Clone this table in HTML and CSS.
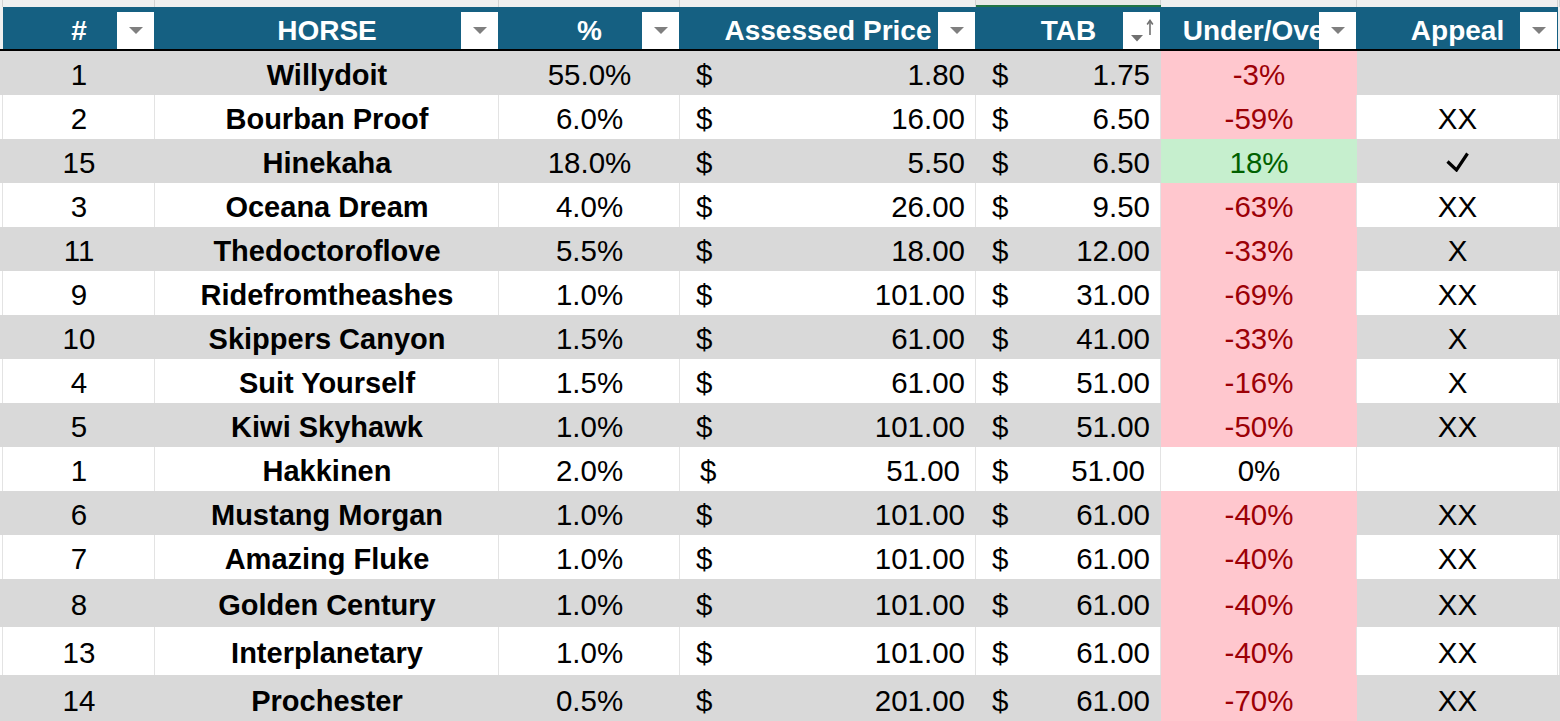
FILE: index.html
```html
<!DOCTYPE html>
<html lang="en">
<head>
<meta charset="utf-8">
<title>Horse Table</title>
<link rel="stylesheet" href="styles.css">
</head>
<body>
<div class="sheet">
  <div class="strip">
    <div class="s"></div><div class="s"></div><div class="s"></div><div class="s"></div><div class="s"></div><div class="s sel"></div><div class="s"></div><div class="s"></div><div class="s"></div>
  </div>
  <div class="head">
    <div class="edge"></div>
    <div class="h">#<span class="fbtn"><svg width="14" height="7" viewBox="0 0 14 7"><polygon points="0,0 14,0 7,7" fill="#7f7f7f"/></svg></span></div>
    <div class="h">HORSE<span class="fbtn"><svg width="14" height="7" viewBox="0 0 14 7"><polygon points="0,0 14,0 7,7" fill="#7f7f7f"/></svg></span></div>
    <div class="h">%<span class="fbtn"><svg width="14" height="7" viewBox="0 0 14 7"><polygon points="0,0 14,0 7,7" fill="#7f7f7f"/></svg></span></div>
    <div class="h">Assessed Price<span class="fbtn"><svg width="14" height="7" viewBox="0 0 14 7"><polygon points="0,0 14,0 7,7" fill="#7f7f7f"/></svg></span></div>
    <div class="h">TAB<span class="fbtn"><svg width="37" height="37" viewBox="0 0 37 37"><polygon points="8,23 20,23 14,29.5" fill="#707070"/><line x1="27" y1="9" x2="27" y2="23" stroke="#707070" stroke-width="1.6"/><polyline points="24.2,12.5 27,8.5 29.8,12.5" fill="none" stroke="#707070" stroke-width="1.6"/></svg></span></div>
    <div class="h">Under/Over<span class="fbtn"><svg width="14" height="7" viewBox="0 0 14 7"><polygon points="0,0 14,0 7,7" fill="#7f7f7f"/></svg></span></div>
    <div class="h">Appeal<span class="fbtn"><svg width="14" height="7" viewBox="0 0 14 7"><polygon points="0,0 14,0 7,7" fill="#7f7f7f"/></svg></span></div>
    <div class="edge"></div>
  </div>

  <div class="r g"><div class="c"></div><div class="c">1</div><div class="c b">Willydoit</div><div class="c">55.0%</div><div class="c acc"><span>$</span><span>1.80</span></div><div class="c acc"><span>$</span><span>1.75</span></div><div class="c neg">-3%</div><div class="c"></div><div class="c"></div></div>
  <div class="r w"><div class="c"></div><div class="c">2</div><div class="c b">Bourban Proof</div><div class="c">6.0%</div><div class="c acc"><span>$</span><span>16.00</span></div><div class="c acc"><span>$</span><span>6.50</span></div><div class="c neg">-59%</div><div class="c">XX</div><div class="c"></div></div>
  <div class="r g"><div class="c"></div><div class="c">15</div><div class="c b">Hinekaha</div><div class="c">18.0%</div><div class="c acc"><span>$</span><span>5.50</span></div><div class="c acc"><span>$</span><span>6.50</span></div><div class="c pos">18%</div><div class="c chk"><svg width="23" height="20" viewBox="0 0 23 20"><polyline points="1.5,9.5 10.5,18 21.5,1.5" fill="none" stroke="#000" stroke-width="3.2"/></svg></div><div class="c"></div></div>
  <div class="r w"><div class="c"></div><div class="c">3</div><div class="c b">Oceana Dream</div><div class="c">4.0%</div><div class="c acc"><span>$</span><span>26.00</span></div><div class="c acc"><span>$</span><span>9.50</span></div><div class="c neg">-63%</div><div class="c">XX</div><div class="c"></div></div>
  <div class="r g"><div class="c"></div><div class="c">11</div><div class="c b">Thedoctoroflove</div><div class="c">5.5%</div><div class="c acc"><span>$</span><span>18.00</span></div><div class="c acc"><span>$</span><span>12.00</span></div><div class="c neg">-33%</div><div class="c">X</div><div class="c"></div></div>
  <div class="r w"><div class="c"></div><div class="c">9</div><div class="c b">Ridefromtheashes</div><div class="c">1.0%</div><div class="c acc"><span>$</span><span>101.00</span></div><div class="c acc"><span>$</span><span>31.00</span></div><div class="c neg">-69%</div><div class="c">XX</div><div class="c"></div></div>
  <div class="r g"><div class="c"></div><div class="c">10</div><div class="c b">Skippers Canyon</div><div class="c">1.5%</div><div class="c acc"><span>$</span><span>61.00</span></div><div class="c acc"><span>$</span><span>41.00</span></div><div class="c neg">-33%</div><div class="c">X</div><div class="c"></div></div>
  <div class="r w"><div class="c"></div><div class="c">4</div><div class="c b">Suit Yourself</div><div class="c">1.5%</div><div class="c acc"><span>$</span><span>61.00</span></div><div class="c acc"><span>$</span><span>51.00</span></div><div class="c neg">-16%</div><div class="c">X</div><div class="c"></div></div>
  <div class="r g"><div class="c"></div><div class="c">5</div><div class="c b">Kiwi Skyhawk</div><div class="c">1.0%</div><div class="c acc"><span>$</span><span>101.00</span></div><div class="c acc"><span>$</span><span>51.00</span></div><div class="c neg">-50%</div><div class="c">XX</div><div class="c"></div></div>
  <div class="r w"><div class="c"></div><div class="c">1</div><div class="c b">Hakkinen</div><div class="c">2.0%</div><div class="c acc alt"><span>$</span><span>51.00</span></div><div class="c acc alt2"><span>$</span><span>51.00</span></div><div class="c">0%</div><div class="c"></div><div class="c"></div></div>
  <div class="r g"><div class="c"></div><div class="c">6</div><div class="c b">Mustang Morgan</div><div class="c">1.0%</div><div class="c acc"><span>$</span><span>101.00</span></div><div class="c acc"><span>$</span><span>61.00</span></div><div class="c neg">-40%</div><div class="c">XX</div><div class="c"></div></div>
  <div class="r w"><div class="c"></div><div class="c">7</div><div class="c b">Amazing Fluke</div><div class="c">1.0%</div><div class="c acc"><span>$</span><span>101.00</span></div><div class="c acc"><span>$</span><span>61.00</span></div><div class="c neg">-40%</div><div class="c">XX</div><div class="c"></div></div>
  <div class="r g tall"><div class="c"></div><div class="c">8</div><div class="c b">Golden Century</div><div class="c">1.0%</div><div class="c acc"><span>$</span><span>101.00</span></div><div class="c acc"><span>$</span><span>61.00</span></div><div class="c neg">-40%</div><div class="c">XX</div><div class="c"></div></div>
  <div class="r w tall"><div class="c"></div><div class="c">13</div><div class="c b">Interplanetary</div><div class="c">1.0%</div><div class="c acc"><span>$</span><span>101.00</span></div><div class="c acc"><span>$</span><span>61.00</span></div><div class="c neg">-40%</div><div class="c">XX</div><div class="c"></div></div>
  <div class="r g tall"><div class="c"></div><div class="c">14</div><div class="c b">Prochester</div><div class="c">0.5%</div><div class="c acc"><span>$</span><span>201.00</span></div><div class="c acc"><span>$</span><span>61.00</span></div><div class="c neg">-70%</div><div class="c">XX</div><div class="c"></div></div>
</div>
</body>
</html>
```

FILE: styles.css
```css
html, body {
  margin: 0;
  padding: 0;
  height: 100%;
  overflow: hidden;
  background: #ffffff;
  font-family: "Liberation Sans", Arial, sans-serif;
  color: #000;
}

.sheet {
  width: 1560px;
}

.strip,
.head,
.r {
  display: grid;
  grid-template-columns: 3px 152px 344px 181px 296px 185px 196px 201px 1fr;
}

.strip {
  height: 7px;
  background: #efefef;
}

.strip .s {
  box-shadow: inset -1px 0 #d2d2d2;
}

.strip .s.sel {
  background: #e8e8e8;
  border-bottom: 2px solid #217346;
  box-sizing: border-box;
}

.head {
  height: 42px;
  background: #156082;
  border-bottom: 2px solid #000;
}

.head .edge {
  background: #efefef;
}

.head .h {
  position: relative;
  color: #fff;
  font-weight: bold;
  font-size: 28px;
  line-height: 36px;
  padding-top: 6px;
  text-align: center;
  white-space: nowrap;
  overflow: hidden;
}

.fbtn {
  position: absolute;
  right: 1px;
  bottom: 0;
  width: 37px;
  height: 37px;
  background: #fff;
  display: flex;
  align-items: center;
  justify-content: center;
}

.r {
  height: 44px;
}

.r.tall {
  height: 48px;
}

.r.g {
  background: #d9d9d9;
}

.r.w {
  background: #fff;
}

.r.w .c {
  box-shadow: inset -1px 0 #e3e3e3;
}

.c {
  box-sizing: border-box;
  padding-top: 4px;
  line-height: 40px;
  font-size: 29.5px;
  text-align: center;
  white-space: nowrap;
  overflow: hidden;
}

.r.tall .c {
  padding-top: 6px;
}

.c.b {
  font-weight: bold;
  font-size: 29px;
}

.c.acc {
  display: flex;
  justify-content: space-between;
  padding-left: 16px;
  padding-right: 11px;
}

.c.acc.alt {
  padding-left: 20px;
  padding-right: 16px;
}

.c.acc.alt2 {
  padding-right: 16px;
}

.c.neg {
  background: #ffc7ce;
  color: #9c0006;
}

.c.pos {
  background: #c6efce;
  color: #006100;
}

.c.chk {
  display: flex;
  align-items: center;
  justify-content: center;
  padding-top: 1px;
}
```
